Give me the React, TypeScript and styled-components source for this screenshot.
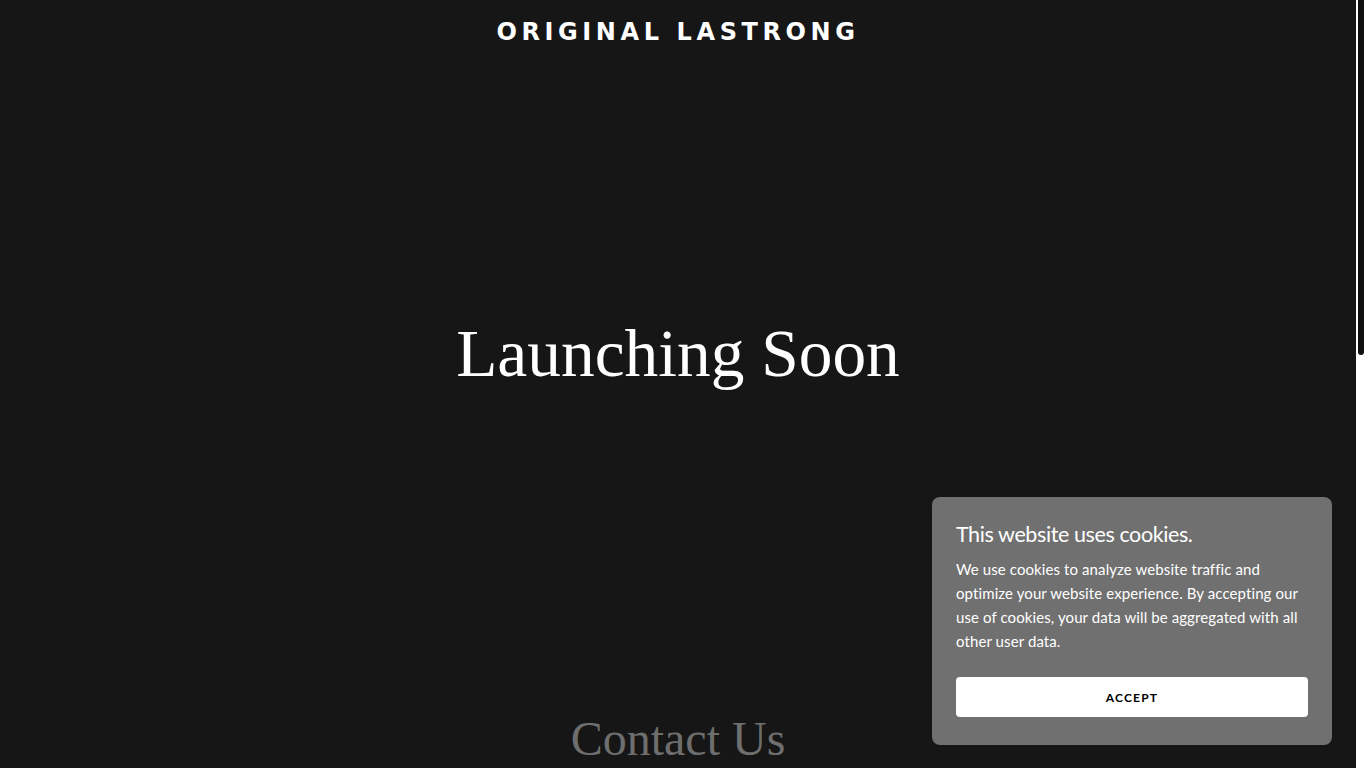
import styled, { createGlobalStyle } from "styled-components";

const Global = createGlobalStyle`
  html, body { margin: 0; padding: 0; background: #161616; }
  body { font-family: "Lato", "Liberation Sans", sans-serif; color: #fff; }
`;

const Page = styled.div`
  min-height: 1661px;
  margin-right: 10px;
  display: flex;
  flex-direction: column;
  background: #161616;
`;

const Header = styled.header`
  display: flex;
  justify-content: center;
  padding: 16px 0 0;
`;

const Brand = styled.h1`
  margin: 0;
  font-family: "DejaVu Sans", "Liberation Sans", sans-serif;
  font-weight: 700;
  font-size: 24px;
  line-height: 32px;
  letter-spacing: 4.6px;
  color: #fff;
  text-transform: uppercase;
`;

const Hero = styled.section`
  height: 611px;
  display: flex;
  align-items: center;
  justify-content: center;
`;

const HeroTitle = styled.h2`
  margin: 0;
  font-family: "Liberation Serif", "DejaVu Serif", serif;
  font-weight: 400;
  font-size: 67.4px;
  line-height: 1;
  color: #fff;
`;

const Contact = styled.section`
  flex: 1;
  display: flex;
  flex-direction: column;
  align-items: center;
  padding-top: 56px;
`;

const ContactTitle = styled.h2`
  margin: 0;
  font-family: "Liberation Serif", "DejaVu Serif", serif;
  font-weight: 400;
  font-size: 48px;
  line-height: 1;
  color: #6e6e6e;
`;

const ScrollTrack = styled.div`
  position: fixed;
  top: 0;
  right: 0;
  width: 10px;
  height: 100vh;
  background: #fff;
`;

const ScrollThumb = styled.div`
  margin-left: 2px;
  width: 6px;
  height: 355px;
  background: #111;
  border-radius: 0 0 3px 3px;
`;

const CookiePanel = styled.div`
  position: fixed;
  right: 34px;
  bottom: 23px;
  width: 400px;
  box-sizing: border-box;
  padding: 22px 24px 28px;
  background: #707070;
  border-radius: 8px;
  display: flex;
  flex-direction: column;
`;

const CookieTitle = styled.h3`
  margin: 0 0 8px;
  font-family: "Lato", "Liberation Sans", sans-serif;
  font-weight: 400;
  font-size: 21.5px;
  line-height: 30px;
  letter-spacing: -0.4px;
  color: #fff;
`;

const CookieText = styled.p`
  margin: 0 0 24px;
  font-family: "Lato", "Liberation Sans", sans-serif;
  font-size: 15px;
  line-height: 24px;
  letter-spacing: 0.1px;
  color: #fff;
`;

const AcceptButton = styled.button`
  height: 40px;
  border: 0;
  border-radius: 4px;
  background: #fff;
  color: #000;
  font-family: "Lato", "Liberation Sans", sans-serif;
  font-weight: 700;
  font-size: 12px;
  letter-spacing: 1.2px;
  text-transform: uppercase;
  cursor: pointer;
`;

export default function App() {
  return (
    <>
      <Global />
      <Page>
        <Header>
          <Brand>Original Lastrong</Brand>
        </Header>
        <Hero>
          <HeroTitle>Launching Soon</HeroTitle>
        </Hero>
        <Contact>
          <ContactTitle>Contact Us</ContactTitle>
        </Contact>
      </Page>
      <ScrollTrack>
        <ScrollThumb />
      </ScrollTrack>
      <CookiePanel>
        <CookieTitle>This website uses cookies.</CookieTitle>
        <CookieText>
          We use cookies to analyze website traffic and optimize your website experience. By
          accepting our use of cookies, your data will be aggregated with all other user data.
        </CookieText>
        <AcceptButton>Accept</AcceptButton>
      </CookiePanel>
    </>
  );
}
